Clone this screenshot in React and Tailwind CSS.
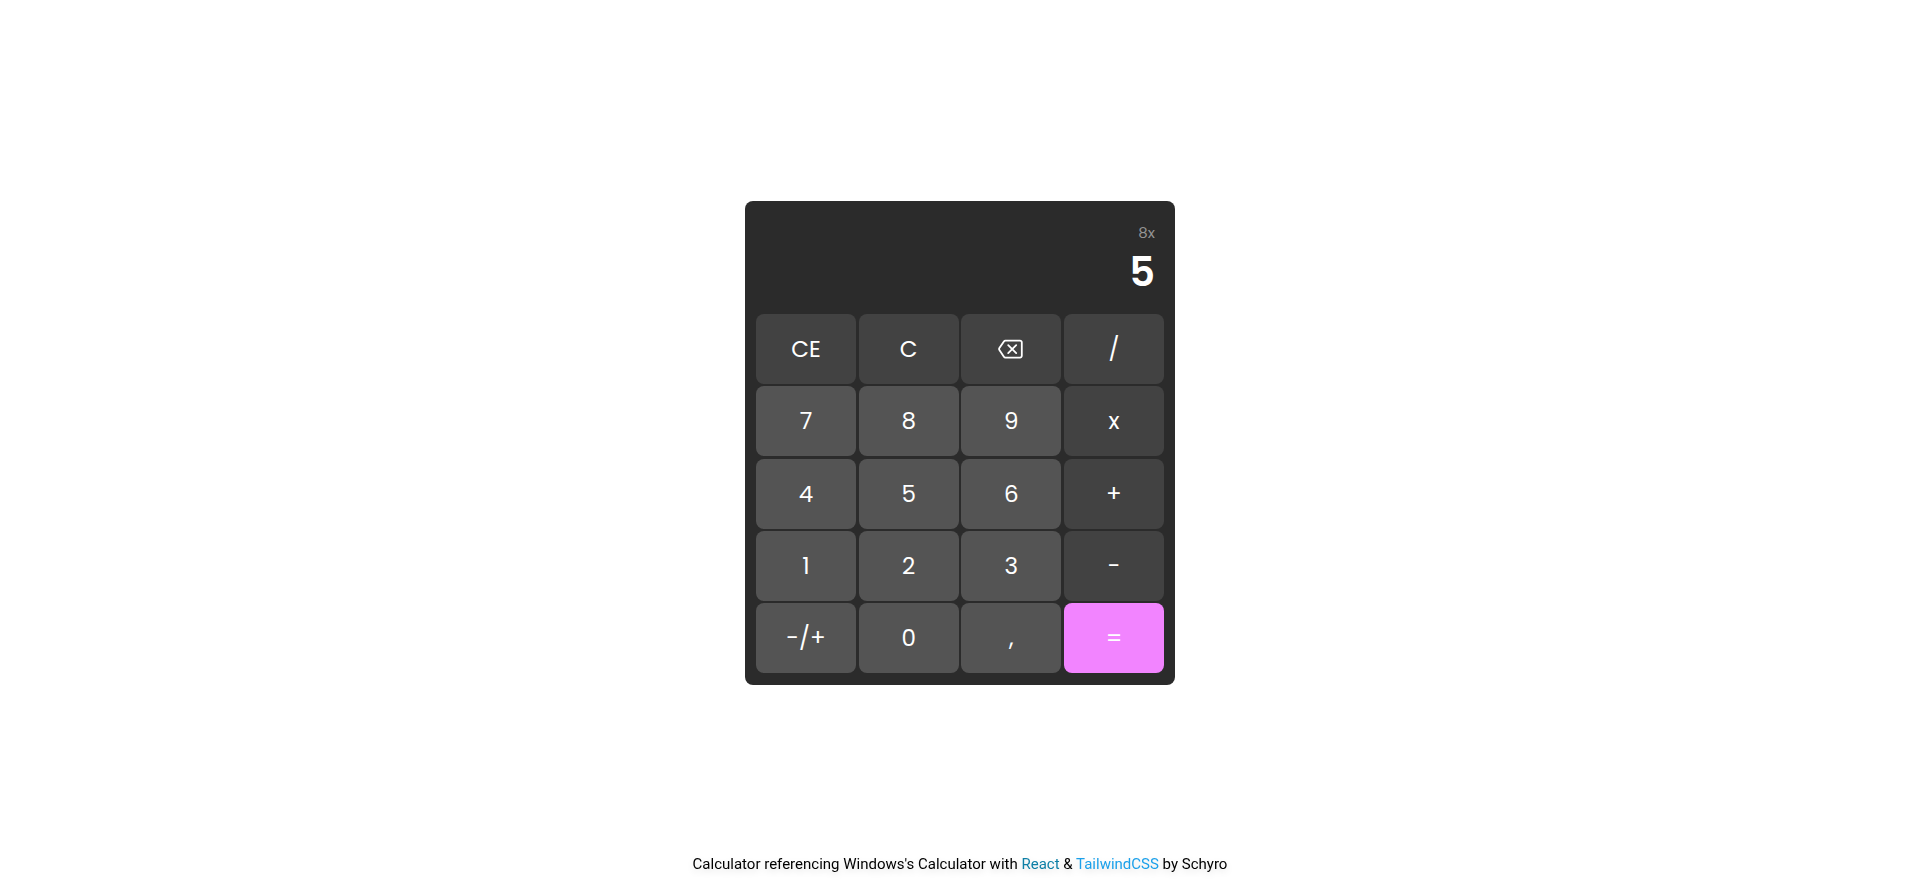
import { useState } from "react";

function BackspaceIcon() {
  return (
    <svg width="26" height="20" viewBox="0 0 26 20" fill="none" stroke="currentColor" strokeWidth="1.8" strokeLinecap="round" strokeLinejoin="round" aria-hidden="true">
      <path d="M7.4 1.6H22a1.8 1.8 0 0 1 1.8 1.8v13.4a1.8 1.8 0 0 1-1.8 1.8H7.4a1.8 1.8 0 0 1-1.5-.8L1.4 11.1a1.8 1.8 0 0 1 0-2L5.9 2.4a1.8 1.8 0 0 1 1.5-.8z" />
      <path d="M10.2 6.1l8 8M18.2 6.1l-8 8" />
    </svg>
  );
}

const KEYS = [
  ["CE", "action"], ["C", "action"], ["back", "action"], ["/", "action"],
  ["7", "digit"], ["8", "digit"], ["9", "digit"], ["x", "action"],
  ["4", "digit"], ["5", "digit"], ["6", "digit"], ["+", "action"],
  ["1", "digit"], ["2", "digit"], ["3", "digit"], ["-", "action"],
  ["-/+", "digit"], ["0", "digit"], [",", "digit"], ["=", "equals"],
];

const TONES = {
  action: "bg-[#424242] hover:bg-[#4a4a4a]",
  digit: "bg-[#545454] hover:bg-[#5c5c5c]",
  equals: "bg-[#f284ff] hover:bg-[#f495ff]",
};

const num = (s) => Number(s.replace(",", "."));
const show = (n) => String(n).replace(".", ",");

function compute(a, op, b) {
  if (op === "+") return a + b;
  if (op === "-") return a - b;
  if (op === "x") return a * b;
  return a / b;
}

export default function App() {
  const [state, setState] = useState({ prev: "8", op: "x", cur: "5" });

  const press = (key) =>
    setState((s) => {
      if (key === "C") return { prev: "", op: "", cur: "0" };
      if (key === "CE") return { ...s, cur: "0" };
      if (key === "back") return { ...s, cur: s.cur.slice(0, -1) || "0" };
      if (key === "-/+") return { ...s, cur: show(-num(s.cur)) };
      if (key === ",") return s.cur.includes(",") ? s : { ...s, cur: s.cur + "," };
      if (key === "=") return s.op ? { prev: "", op: "", cur: show(compute(num(s.prev), s.op, num(s.cur))) } : s;
      if (/\d/.test(key)) return { ...s, cur: s.cur === "0" ? key : s.cur + key };
      const prev = s.op ? show(compute(num(s.prev), s.op, num(s.cur))) : s.cur;
      return { prev, op: key, cur: "0" };
    });

  return (
    <div className="grid min-h-screen grid-rows-[1fr_auto_1fr] justify-items-center bg-white pt-1 pl-0.5 font-['Poppins','Inter',sans-serif]">
      <main className="row-start-2 w-full max-w-[430px] rounded-lg bg-[#2b2b2b] p-[11px] pb-3 text-white">
        <div className="flex flex-col items-end px-[9px] pt-[9px] pb-[19px] text-right">
          <p className="text-[15px] leading-6 text-[#959595]">{state.prev}{state.op}</p>
          <output className="mt-1 h-[46px] text-[40px] leading-[46px] font-semibold">{state.cur}</output>
        </div>
        <div className="grid h-[359px] grid-cols-[repeat(4,100px)] grid-rows-[repeat(5,70px)] content-between justify-between">
          {KEYS.map(([key, tone]) => (
            <button
              key={key}
              type="button"
              aria-label={key === "back" ? "Backspace" : undefined}
              onClick={() => press(key)}
              className={`flex items-center justify-center rounded-lg text-[23px] leading-8 ${TONES[tone]}`}
            >
              {key === "back" ? <BackspaceIcon /> : key}
            </button>
          ))}
        </div>
      </main>
      <footer className="row-start-3 self-end pb-1.5 font-['Segoe_UI','Roboto',sans-serif] text-[15px] leading-6 text-black drop-shadow-md">
        Calculator referencing Windows's Calculator with{" "}
        <a href="https://react.dev" className="text-[#0e7fa6]">React</a> &amp;{" "}
        <a href="https://tailwindcss.com" className="text-[#1ba0ea]">TailwindCSS</a> by Schyro
      </footer>
    </div>
  );
}
